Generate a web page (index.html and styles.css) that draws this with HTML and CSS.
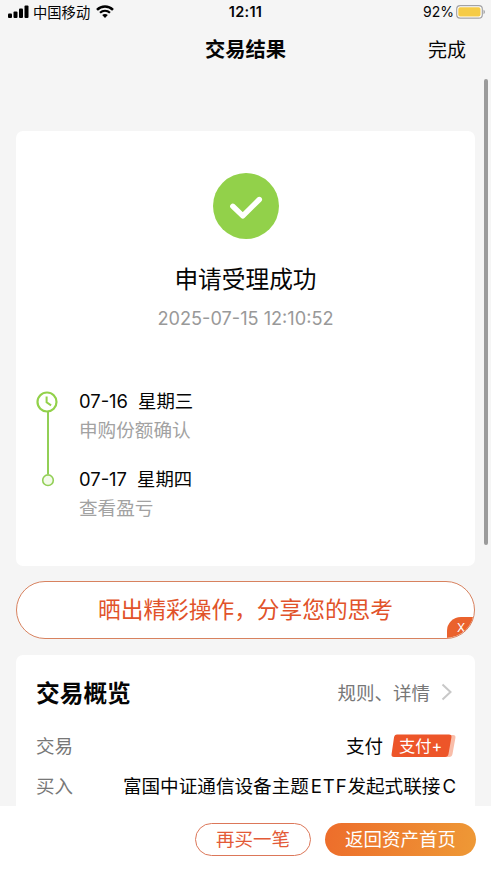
FILE: index.html
```html
<!DOCTYPE html>
<html lang="zh-CN">
<head>
<meta charset="utf-8">
<title>交易结果</title>
<link rel="stylesheet" href="styles.css">
</head>
<body>
<div class="screen">
  <header class="status">
    <div class="status-left">
      <svg class="signal" width="21" height="13" viewBox="0 0 21 13"><rect x="0" y="8.6" width="4" height="4.4" rx="1"/><rect x="5.5" y="6.5" width="4" height="6.5" rx="1"/><rect x="11" y="3.5" width="4" height="9.5" rx="1"/><rect x="16.5" y="0.5" width="4" height="12.5" rx="1"/></svg>
      <span class="carrier">中国移动</span>
      <svg class="wifi" width="18" height="13" viewBox="0 0 18 13"><path d="M1 4.8C5.5.4 12.5.4 17 4.8" fill="none" stroke="#000" stroke-width="2.5"/><path d="M4 7.8c2.9-2.7 7.1-2.7 10 0" fill="none" stroke="#000" stroke-width="2.2"/><path d="M6.2 10.1c1.6-1.5 4-1.5 5.6 0L9 12.9z"/></svg>
    </div>
    <span class="time">12:11</span>
    <div class="status-right">
      <span class="percent">92%</span>
      <svg width="30" height="14" viewBox="0 0 30 14"><rect x=".7" y=".7" width="25.6" height="12.4" rx="3.4" fill="#fff" stroke="#a2a2a4" stroke-width="1.2"/><rect x="2.3" y="2.3" width="22.2" height="9.2" rx="1.8" fill="#f5cb46"/><path d="M27.5 4.8c1.9.7 1.9 3.7 0 4.4z" fill="#a2a2a4"/></svg>
    </div>
  </header>
  <nav class="nav">
    <h1>交易结果</h1>
    <a class="done">完成</a>
  </nav>
  <main class="content">
    <section class="card result">
      <svg class="check" width="66" height="66" viewBox="0 0 66 66"><circle cx="33" cy="33" r="33" fill="#92d14a"/><path d="M19.8 33.3l10 9.6L46.3 26.5" fill="none" stroke="#fff" stroke-width="5.4" stroke-linecap="round" stroke-linejoin="round"/></svg>
      <h2>申请受理成功</h2>
      <p class="stamp">2025-07-15 12:10:52</p>
      <div class="timeline">
        <svg class="track" width="22" height="98" viewBox="0 0 22 98"><path d="M12 21v62" stroke="#92cf56" stroke-width="2"/><circle cx="11" cy="11" r="9.5" fill="#fff" stroke="#92d14a" stroke-width="2.2"/><path d="M10.6 5.5v5.8l4.500 3" fill="none" stroke="#92d14a" stroke-width="2"/><circle cx="12" cy="89.2" r="5.3" fill="#f3fbea" stroke="#92cf56" stroke-width="1.6"/></svg>
        <ol class="steps">
          <li><p class="day"><span>07-16</span><span>星期三</span></p><p class="note">申购份额确认</p></li>
          <li><p class="day"><span>07-17</span><span>星期四</span></p><p class="note">查看盈亏</p></li>
        </ol>
      </div>
    </section>
    <section class="share">
      <span>晒出精彩操作，分享您的思考</span>
      <b class="close">X</b>
    </section>
    <section class="card overview">
      <div class="row head"><h3>交易概览</h3><a class="rules">规则、详情<svg width="12" height="18" viewBox="0 0 12 18"><path d="M1.5 1.5L9.5 9l-8 7.5" fill="none" stroke="#c8c8c8" stroke-width="2"/></svg></a></div>
      <div class="row pay"><span class="label">交易</span><span class="value">支付<span class="tag"><svg width="65" height="24" viewBox="0 0 65 24"><path d="M10 1h52q3 0 2.400 3L61.500 20q-.5 3-3.500 3H10z" fill="#f9bda9"/><path d="M6 .5h52q3 0 2.400 3L57.500 20q-.5 3-3.500 3H3q-3 0-2.400-3L3 3.500q.5-3 3-3z" fill="#ed5529"/></svg><em>支付+</em></span></span></div>
      <div class="row fund"><span class="label">买入</span><span class="value">富国中证通信设备主题<span class="latin">ETF</span>发起式联接<span class="latin">C</span></span></div>
    </section>
    <i class="scrollbar"></i>
  </main>
  <footer class="actions">
    <button class="again">再买一笔</button>
    <button class="home">返回资产首页</button>
  </footer>
</div>
</body>
</html>
```
FILE: styles.css
```css
* { box-sizing: border-box; margin: 0; padding: 0; }
body {
  font-family: Inter, "Noto Sans CJK SC", sans-serif;
  background: #f5f5f5;
  color: #050505;
}
svg { display: block; flex: none; }
.screen { width: 491px; height: 872px; display: flex; flex-direction: column; overflow: hidden; white-space: nowrap; }

.status { height: 24px; display: grid; grid-template-columns: 1fr auto 1fr; align-items: center; padding: 0 6px 1px 8px; font-size: 14px; }
.status-left { display: flex; align-items: center; }
.carrier { margin: 0 6px 0 4px; font-size: 14.3px; }
.time { font-size: 14.5px; font-weight: 600; letter-spacing: .3px; position: relative; left: -1px; }
.status-right { display: flex; align-items: center; justify-content: flex-end; gap: 2px; margin-right: -1px; }
.percent { font-size: 14px; }

.nav { height: 51px; display: grid; grid-template-columns: 1fr auto 1fr; align-items: center; padding: 1px 25px 0; }
.nav h1 { grid-column: 2; font-size: 20.300px; line-height: 30px; font-weight: 700; }
.done { justify-self: end; font-size: 19px; line-height: 30px; padding-top: 2px; }

.content { flex: 1; min-height: 0; position: relative; overflow: hidden; padding: 56px 16px 0; }
.card { background: #fff; border-radius: 7px; }
.result { height: 435px; padding: 42px 20px 0; }
.check { margin: 0 auto; }
.result h2 { margin-top: 24px; text-align: center; font-size: 23.700px; line-height: 34px; font-weight: 400; }
.stamp { margin-top: 9px; text-align: center; font-size: 18.150px; line-height: 24px; color: #999; }
.timeline { margin-top: 61px; display: flex; gap: 21px; }
.steps { list-style: none; display: grid; row-gap: 20px; }
.day { display: flex; gap: 10px; font-size: 18.400px; line-height: 29px; margin-top: -4px; }
.note { font-size: 18.600px; line-height: 29px; color: #a2a2a2; }
.steps li { height: 58px; }

.share { position: relative; height: 58px; margin: 15px 0 16px; border: 1px solid #d8825f; border-radius: 29px; background: #fff; overflow: hidden; text-align: center; font-size: 22.700px; line-height: 56px; color: #e1532a; }
.close { position: absolute; right: -1px; bottom: -1px; width: 28px; height: 22px; background: #ea622d; border-radius: 14px 0 0 0; color: #fff; font-size: 12px; font-weight: 400; line-height: 22px; }

.overview { height: 170px; padding: 19px 20px 0; }
.row { display: flex; justify-content: space-between; align-items: center; font-size: 18.500px; }
.head { height: 38px; }
.head h3 { font-size: 23.700px; line-height: 38px; font-weight: 700; padding-top: 1px; }
.rules { display: flex; align-items: center; gap: 11px; margin: 0 2px 2px 0; color: #777; }
.pay { height: 40px; margin-top: 13px; }
.fund { height: 40px; margin-right: -1px; }
.label { color: #777; }
.value { display: flex; align-items: center; }
.tag { display: grid; align-items: center; margin: 2px 0 0 8px; }
.pay .value { margin-right: -1px; }
.tag svg, .tag em { grid-area: 1 / 1; }
.tag em { padding-left: 8px; font-style: normal; font-size: 16.300px; line-height: 24px; color: #fff; }
.fund .value { display: block; font-size: 18.600px; margin-top: -1px; }
.latin { letter-spacing: .8px; margin-left: 2px; }
.latin:last-child { letter-spacing: 0; }
.scrollbar { position: absolute; right: 3px; top: 4px; width: 4px; height: 466px; border-radius: 2px; background: #9b9b9b; }

.actions { height: 66px; padding: 1px 15px 0; display: flex; justify-content: flex-end; align-items: center; gap: 14px; background: #fff; }
.actions button { height: 33px; border-radius: 17px; font: 18.500px/31px Inter, "Noto Sans CJK SC", sans-serif; }
.again { width: 116px; border: 1px solid #dc7759; background: #fff; color: #e35a37; }
.home { width: 151px; border: 0; background: linear-gradient(100deg, #ed6d2b, #ee9936); color: #fff; }
```
